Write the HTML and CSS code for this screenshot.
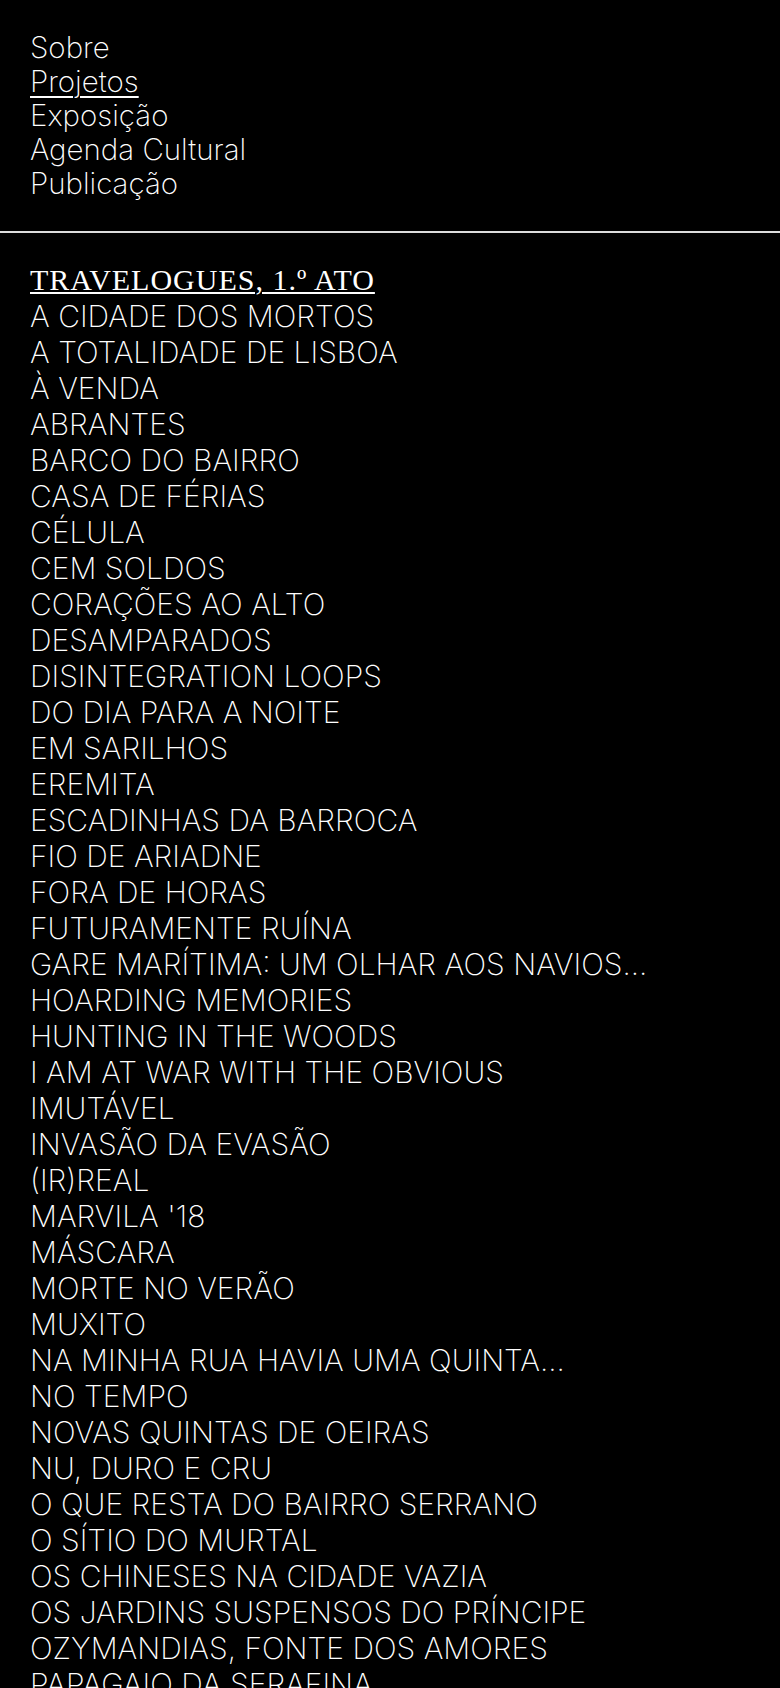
FILE: index.html
```html
<!DOCTYPE html>
<html lang="pt">
<head>
  <meta charset="UTF-8">
  <meta name="viewport" content="width=device-width, initial-scale=1">
  <title>Projetos</title>
  <link rel="stylesheet" href="styles.css">
</head>
<body>
  <nav class="menu">
    <a href="#">Sobre</a>
    <a href="#" class="active">Projetos</a>
    <a href="#">Exposição</a>
    <a href="#">Agenda Cultural</a>
    <a href="#">Publicação</a>
  </nav>

  <hr class="divider">

  <ul class="projects">
    <li class="current"><a href="#">TRAVELOGUES, 1.º ATO</a></li>
    <li><a href="#">A CIDADE DOS MORTOS</a></li>
    <li><a href="#">A TOTALIDADE DE LISBOA</a></li>
    <li><a href="#">À VENDA</a></li>
    <li><a href="#">ABRANTES</a></li>
    <li><a href="#">BARCO DO BAIRRO</a></li>
    <li><a href="#">CASA DE FÉRIAS</a></li>
    <li><a href="#">CÉLULA</a></li>
    <li><a href="#">CEM SOLDOS</a></li>
    <li><a href="#">CORAÇÕES AO ALTO</a></li>
    <li><a href="#">DESAMPARADOS</a></li>
    <li><a href="#">DISINTEGRATION LOOPS</a></li>
    <li><a href="#">DO DIA PARA A NOITE</a></li>
    <li><a href="#">EM SARILHOS</a></li>
    <li><a href="#">EREMITA</a></li>
    <li><a href="#">ESCADINHAS DA BARROCA</a></li>
    <li><a href="#">FIO DE ARIADNE</a></li>
    <li><a href="#">FORA DE HORAS</a></li>
    <li><a href="#">FUTURAMENTE RUÍNA</a></li>
    <li><a href="#">GARE MARÍTIMA: UM OLHAR AOS NAVIOS...</a></li>
    <li><a href="#">HOARDING MEMORIES</a></li>
    <li><a href="#">HUNTING IN THE WOODS</a></li>
    <li><a href="#">I AM AT WAR WITH THE OBVIOUS</a></li>
    <li><a href="#">IMUTÁVEL</a></li>
    <li><a href="#">INVASÃO DA EVASÃO</a></li>
    <li><a href="#">(IR)REAL</a></li>
    <li><a href="#">MARVILA '18</a></li>
    <li><a href="#">MÁSCARA</a></li>
    <li><a href="#">MORTE NO VERÃO</a></li>
    <li><a href="#">MUXITO</a></li>
    <li><a href="#">NA MINHA RUA HAVIA UMA QUINTA...</a></li>
    <li><a href="#">NO TEMPO</a></li>
    <li><a href="#">NOVAS QUINTAS DE OEIRAS</a></li>
    <li><a href="#">NU, DURO E CRU</a></li>
    <li><a href="#">O QUE RESTA DO BAIRRO SERRANO</a></li>
    <li><a href="#">O SÍTIO DO MURTAL</a></li>
    <li><a href="#">OS CHINESES NA CIDADE VAZIA</a></li>
    <li><a href="#">OS JARDINS SUSPENSOS DO PRÍNCIPE</a></li>
    <li><a href="#">OZYMANDIAS, FONTE DOS AMORES</a></li>
    <li><a href="#">PAPAGAIO DA SERAFINA</a></li>
  </ul>
</body>
</html>
```

FILE: styles.css
```css
* {
  margin: 0;
  padding: 0;
  box-sizing: border-box;
}

body {
  background: #000;
  color: #fff;
  font-family: Inter, 'Liberation Sans', sans-serif;
  font-weight: 200;
}

a {
  color: #fff;
  text-decoration: none;
}

.menu {
  display: flex;
  flex-direction: column;
  align-items: flex-start;
  padding: 30px 30px 0;
  font-size: 29.5px;
  line-height: 34px;
}

.menu .active {
  text-decoration: underline;
  text-decoration-thickness: 2px;
  text-underline-offset: 4px;
}

.divider {
  border: none;
  height: 2px;
  background: #ddd;
  margin-top: 31px;
}

.projects {
  list-style: none;
  padding: 28px 30px 0;
  font-size: 30px;
  line-height: 36px;
}

.projects .current a {
  font-family: 'Liberation Serif', serif;
  font-weight: 400;
  letter-spacing: 1px;
  text-decoration: underline;
  text-decoration-thickness: 2px;
  text-underline-offset: 2px;
}
```
